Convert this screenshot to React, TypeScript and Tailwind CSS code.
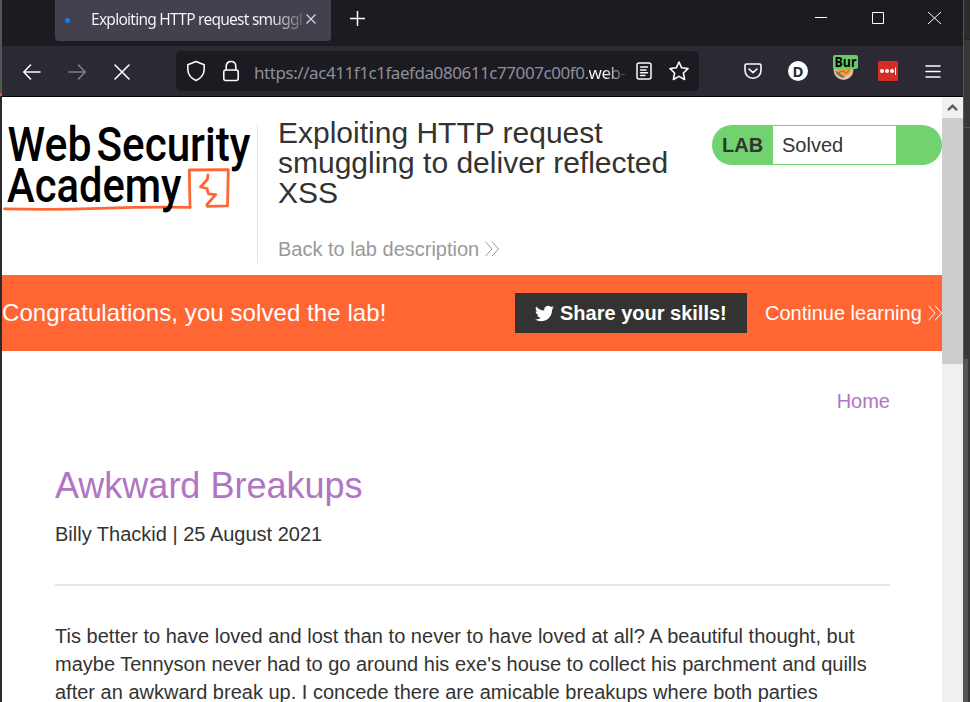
import React from "react";

const stroke = { fill: "none", stroke: "#fbfbfe", strokeLinecap: "round", strokeLinejoin: "round" } as const;

function Chevrons({ className }: { className: string }) {
  return (
    <svg className={className} width="14" height="16" viewBox="0 0 14 16" fill="none" stroke="currentColor" strokeWidth="1">
      <path d="M0.5 0.7 7 8 0.5 15.3M7 0.7 13.5 8 7 15.3" />
    </svg>
  );
}

function TabBar() {
  return (
    <div className="flex h-[46px] bg-[#1c1b22] font-['Noto_Sans','Open_Sans',sans-serif]">
      <div className="ml-[53px] flex h-[41px] w-[276px] items-center rounded-b-[4px] bg-[#42414d] pb-px">
        <span className="ml-[10px] h-[5px] w-[5px] shrink-0 rounded-full bg-[#0a84ff]" />
        <span className="ml-[21px] w-[211px] shrink-0 overflow-hidden bg-linear-to-r from-[#fbfbfe] from-85% to-[#fbfbfe]/20 bg-clip-text text-[15.5px] tracking-[-0.74px] whitespace-nowrap text-transparent">
          Exploiting HTTP request smuggling
        </span>
        <svg className="-mt-[2px] ml-[4px]" width="10" height="10" viewBox="0 0 10 10" fill="none" stroke="#d5d4dc" strokeWidth="1.3">
          <path d="M.5.5 9.5 9.5M9.5.5.5 9.5" />
        </svg>
      </div>
      <svg className="mt-[11px] ml-[19px]" width="15" height="15" viewBox="0 0 15 15" fill="none" stroke="#fbfbfe" strokeWidth="1.5">
        <path d="M0 7.5H15M7.5 0V15" />
      </svg>
      <svg className="mt-[10px] ml-auto" width="148" height="16" viewBox="0 0 148 16" fill="none" stroke="#fff" strokeWidth="1">
        <path d="M0 7.5H12M57.5 2.5H68.5V13.5H57.5ZM113 2 126 14M126 2 113 14" />
      </svg>
    </div>
  );
}

function Toolbar() {
  return (
    <div className="flex h-[51px] items-center border-b border-black bg-[#2b2a33] font-['Noto_Sans','Open_Sans',sans-serif]">
      <svg className="mt-px ml-[21px]" width="18" height="16" viewBox="0 0 18 16" {...stroke} strokeWidth="1.6">
        <path d="M17 8H1M7.5 1 .8 8 7.5 15" />
      </svg>
      <svg className="mt-px ml-[27px] opacity-40" width="18" height="16" viewBox="0 0 18 16" {...stroke} strokeWidth="1.6">
        <path d="M1 8H17M10.5 1 17.2 8 10.5 15" />
      </svg>
      <svg className="mt-px ml-[28px]" width="16" height="16" viewBox="0 0 16 16" {...stroke} strokeWidth="1.6">
        <path d="M1 1 15 15M15 1 1 15" />
      </svg>
      <div className="ml-[46px] flex h-[40px] w-[523px] items-center rounded-[5px] bg-[#1c1b22]">
        <svg className="ml-[10px] shrink-0" width="20" height="22" viewBox="0 0 20 22" {...stroke} strokeWidth="1.6">
          <path d="M10 1.5 18.2 4.8V9.5C18 14.5 14.5 18.5 10 20.5 5.5 18.5 2 14.5 1.8 9.5V4.8Z" />
        </svg>
        <svg className="ml-[16px] shrink-0" width="18" height="22" viewBox="0 0 18 22" {...stroke} strokeWidth="1.6">
          <rect x="1.8" y="10" width="14.4" height="10.5" rx="2" />
          <path d="M4.2 10V6.5C4.2 3.4 6.3 1.5 9 1.5S13.8 3.4 13.8 6.5V10" />
        </svg>
        <span className="ml-[14px] flex w-[371px] shrink-0 pt-[3px] text-[17px] tracking-[-0.44px] whitespace-nowrap text-[#8f8f98]">
          https://ac411f1c1faefda080611c77007c00f0.
          <span className="bg-linear-to-r from-[#fbfbfe] from-45% to-[#fbfbfe]/10 bg-clip-text text-transparent">web-</span>
        </span>
        <svg className="ml-[11px] shrink-0" width="16" height="18" viewBox="0 0 16 18" {...stroke} strokeWidth="1.5">
          <rect x="1" y="1" width="14" height="16" rx="2" />
          <path d="M4.5 5H11.5M4.5 8H10M4.5 10.8H11.5M4.5 13.5H9" />
        </svg>
        <svg className="ml-[17px] shrink-0" width="20" height="20" viewBox="0 0 20 20" {...stroke} strokeWidth="1.6">
          <path d="m10 1 2.7 5.8 6.3.8-4.6 4.4 1.2 6.5L10 15.4 4.4 18.5 5.6 12 1 7.6l6.3-.8Z" />
        </svg>
      </div>
      <svg className="ml-[45px]" width="18" height="16" viewBox="0 0 18 16" {...stroke} strokeWidth="1.6">
        <path d="M2.5 1H15.5Q17 1 17 2.5V7C17 12 13.5 15.2 9 15.2S1 12 1 7V2.5Q1 1 2.5 1ZM5 6 9 9.7 13 6" />
      </svg>
      <span className="ml-[26px] flex h-5 w-5 items-center justify-center rounded-full bg-white text-[15px] leading-none font-bold text-[#2b2a33]">D</span>
      <svg className="-mt-[5px] ml-[25px]" width="25" height="28" viewBox="0 0 25 28">
        <circle cx="10.5" cy="15" r="10" fill="#e9b17e" />
        <path d="M1.5 14Q2 23 10.5 24 17 24 19.5 16L15 21 1.5 14Z" fill="#d5d2cd" />
        <path d="M2 15 11 21 14 20 10 23Q3 21 2 15Z" fill="#77736d" />
        <path d="M4 13H18L15 20 10 20 4 17Z" fill="#ff962d" />
        <path d="M5 18 10 16 13 18 17 15" fill="none" stroke="#a66a31" />
        <rect width="25" height="14" rx="2" fill="#68cc68" />
        <text x="1.5" y="11.5" fontSize="13.5" fontWeight="700" textLength="22" lengthAdjust="spacingAndGlyphs" fill="#000" className="font-['Open_Sans',sans-serif]">Bur</text>
      </svg>
      <svg className="ml-[20px]" width="20" height="20" viewBox="0 0 20 20">
        <rect width="20" height="20" rx="1.5" fill="#d32d27" />
        <g fill="#fff"><circle cx="4" cy="10" r="2" /><circle cx="9" cy="10" r="2" /><circle cx="14" cy="10" r="2" /><rect x="17" y="6.5" width="1" height="7.5" /></g>
      </svg>
      <svg className="ml-[27px]" width="16" height="13" viewBox="0 0 16 13" {...stroke} strokeWidth="1.5">
        <path d="M1 1H15M1 6.5H15M1 12H15" />
      </svg>
    </div>
  );
}

function Logo() {
  return (
    <svg className="mt-[23px] block" width="250" height="97" viewBox="2 120 250 97" fontFamily="'Roboto',sans-serif" fontWeight="500" fontSize="48">
      <g fill="none" stroke="#ff6633" strokeLinecap="round" strokeLinejoin="round" strokeWidth="2.8">
        <path d="M190 207.3 189.3 170 228.3 169.7 227.5 205.8 207.3 206.3 206.9 204.5 215.8 194.6 208.5 193.8 207 188.5 200.5 187 207.3 179.5 208 175" />
        <path d="M4.5 208.8Q50 210 100 208.3T190 207.3" />
      </g>
      <g fill="#000">
        <text x="7.5" y="161" textLength="84" lengthAdjust="spacingAndGlyphs">Web</text>
        <text x="96.5" y="161" textLength="154" lengthAdjust="spacingAndGlyphs">Security</text>
        <text x="7" y="201.7" textLength="174.5" lengthAdjust="spacingAndGlyphs">Academy</text>
      </g>
    </svg>
  );
}

function LabHeader() {
  return (
    <header className="flex h-[178px]">
      <div className="w-[255px] shrink-0"><Logo /></div>
      <div className="mt-7 h-[138px] w-px shrink-0 bg-[#e2e2e2]" />
      <div className="ml-5 w-[414px] shrink-0 pt-[21px]">
        <h2 className="w-[400px] text-[30px] leading-[30px]">Exploiting HTTP request smuggling to deliver reflected XSS</h2>
        <a className="mt-[27px] flex items-center text-[20px] leading-7 text-[#999]">
          Back to lab description<Chevrons className="ml-[6px]" />
        </a>
      </div>
      <div className="mt-7 ml-5 flex h-10 w-[230px] items-center overflow-hidden rounded-full bg-[#71d36f] text-[20px]">
        <span className="w-[61px] pl-[10px] font-bold">LAB</span>
        <p className="h-[38px] w-[123px] bg-white pl-[9px] leading-[38px]">Solved</p>
      </div>
    </header>
  );
}

function SolvedBanner() {
  return (
    <section className="flex h-[76px] items-center bg-[#ff6633] text-white">
      <h4 className="w-[513px] shrink-0 text-[24px] tracking-[0.08px]">Congratulations, you solved the lab!</h4>
      <div className="flex h-10 w-[232px] shrink-0 items-center bg-[#333332] pl-5 text-[20px] font-bold whitespace-nowrap">
        <svg className="mr-[6px]" width="19" height="19" viewBox="0 0 24 24" fill="white">
          <path d="M23.95 4.57a10 10 0 0 1-2.82.78 4.96 4.96 0 0 0 2.16-2.73c-.95.56-2 .96-3.13 1.18a4.92 4.92 0 0 0-8.38 4.49A13.98 13.98 0 0 1 1.64 3.16a4.92 4.92 0 0 0 1.52 6.57 4.88 4.88 0 0 1-2.22-.61v.06a4.92 4.92 0 0 0 3.94 4.83 5 5 0 0 1-2.21.09 4.93 4.93 0 0 0 4.6 3.42A9.9 9.9 0 0 1 0 19.54a13.99 13.99 0 0 0 7.55 2.21c9.05 0 14-7.5 14-13.98l-.02-.64a10 10 0 0 0 2.42-2.56Z" />
        </svg>
        Share your skills!
      </div>
      <a className="ml-[18px] flex items-center text-[20px] whitespace-nowrap">
        Continue learning<Chevrons className="ml-[6px] shrink-0" />
      </a>
    </section>
  );
}

export default function App() {
  return (
    <div className="flex h-[702px] w-[970px] overflow-hidden bg-[#333]">
      <div className="flex w-[2px] shrink-0 flex-col bg-[#292a2d]">
        <div className="h-[93px] bg-[#555]" />
        <div className="h-[3px] bg-[#d55b2b]" />
      </div>
      <div className="flex w-[961px] shrink-0 flex-col">
        <TabBar />
        <Toolbar />
        <div className="flex h-[605px]">
          <main className="h-full w-[940px] shrink-0 overflow-hidden bg-white font-['Liberation_Sans',Arial,sans-serif] text-[#333332]">
            <LabHeader />
            <SolvedBanner />
            <article className="mr-[52px] ml-[53px] text-[20px] leading-7">
              <nav className="pt-[36px] text-right text-[#b075c3]">Home</nav>
              <h1 className="mt-[50px] text-[36px] leading-[42px] text-[#b075c3]">Awkward Breakups</h1>
              <p className="mt-[13px]">Billy Thackid | 25 August 2021</p>
              <hr className="mt-[36px] border-0 border-t-2 border-[#e5e5e5]" />
              <p className="mt-[36px] whitespace-nowrap">
                <span className="tracking-[0.02px]">Tis better to have loved and lost than to never to have loved at all? A beautiful thought, but</span><br />
                maybe Tennyson never had to go around his exe's house to collect his parchment and quills<br />
                after an awkward break up. I concede there are amicable breakups where both parties
              </p>
            </article>
          </main>
          <div className="flex w-[21px] flex-col bg-[#f0f0f0]">
            <div className="flex h-[21px] items-center justify-center">
              <svg width="11" height="8" viewBox="0 0 11 8" fill="none" stroke="#606060" strokeWidth="2.4"><path d="M1 6.2 5.5 1.8 10 6.2" /></svg>
            </div>
            <div className="h-[246px] bg-[#cdcdcd]" />
          </div>
        </div>
      </div>
      <div className="flex w-[7px] flex-col border-l border-[#555] bg-[#373737]">
        <div className="h-[40px] border-b border-[#222] bg-[#2c2c2b]" />
        <div className="h-[88px] border-b border-[#555]" />
        <div className="mt-[231px] w-[4px] grow bg-[#565656]" />
      </div>
    </div>
  );
}
